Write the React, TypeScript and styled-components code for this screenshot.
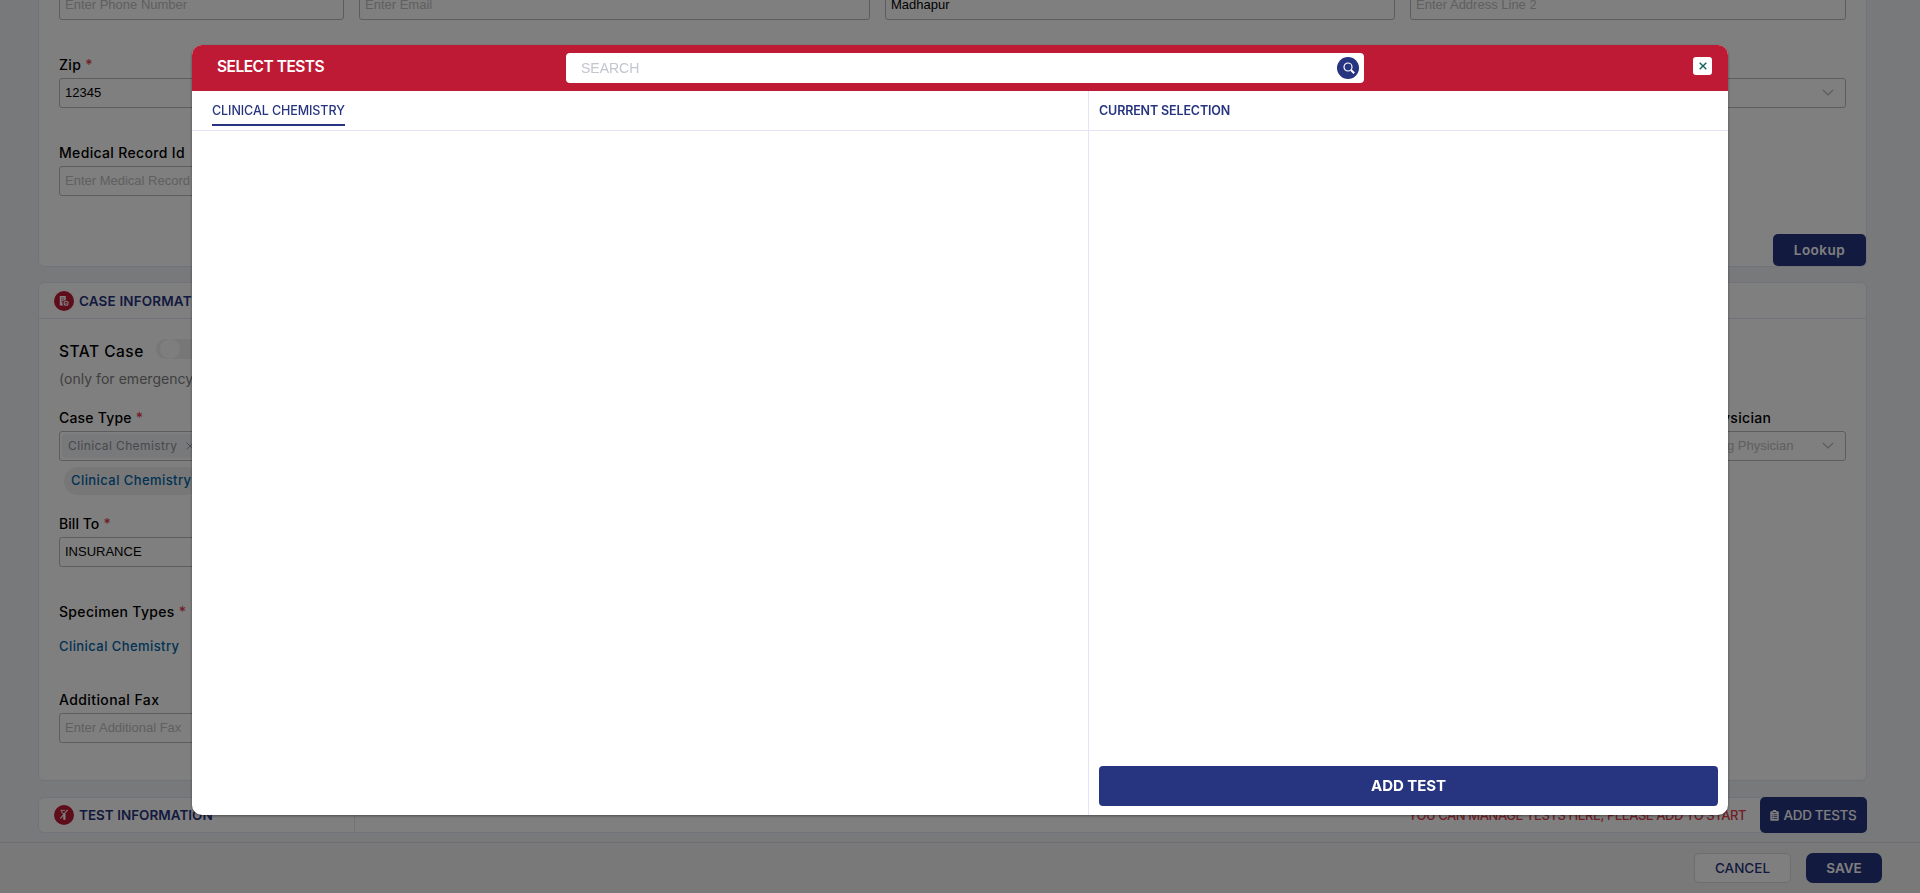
import React from 'react';
import styled, { createGlobalStyle } from 'styled-components';

const NAVY = '#273480';
const RED = '#be1a36';
const LINE = '#e5e4f5';

const GlobalStyle = createGlobalStyle`
  * { box-sizing: border-box; }
  html, body { margin: 0; padding: 0; overflow: hidden; }
  body { font-family: Inter, "Liberation Sans", sans-serif; font-size: 14px; color: #000; }
  button, input { font-family: inherit; margin: 0; }
`;

const Screen = styled.div`
  display: flex;
  flex-direction: column;
  height: 893px;
  overflow: hidden;
  background: #f0f2f7;
`;

const Content = styled.main`
  flex: 1;
  min-height: 0;
  display: flex;
  flex-direction: column;
  gap: 15px;
  padding: 0 53px 0 38px;
  overflow: hidden;
`;

const Card = styled.section<{ $height: number; $offset?: number }>`
  flex: none;
  height: ${(p) => p.$height}px;
  margin-top: ${(p) => p.$offset ?? 0}px;
  display: flex;
  flex-direction: column;
  background: #fff;
  border: 1px solid ${LINE};
  border-radius: 6px;
`;

const CardHeader = styled.header`
  flex: none;
  display: flex;
  align-items: center;
  gap: 5px;
  height: 36px;
  padding-left: 15px;
  border-bottom: 1px solid ${LINE};
`;

const IconDisc = styled.span`
  display: flex;
  align-items: center;
  justify-content: center;
  width: 20px;
  height: 20px;
  border-radius: 50%;
  background: ${RED};
`;

const Heading = styled.h2<{ $spacing: number }>`
  margin: 0;
  font-size: 13.5px;
  font-weight: 600;
  line-height: 20px;
  letter-spacing: ${(p) => p.$spacing}px;
  color: ${NAVY};
  white-space: nowrap;
`;

const FieldRow = styled.div<{ $columns: string; $height?: number }>`
  display: grid;
  grid-template-columns: ${(p) => p.$columns};
  column-gap: 15px;
  height: ${(p) => p.$height ?? 88}px;
  padding: 0 20px;
`;

const FieldBox = styled.div`
  display: flex;
  flex-direction: column;
  min-width: 0;
`;

const Label = styled.label<{ $spacing?: number }>`
  height: 26px;
  line-height: 26px;
  font-weight: 500;
  letter-spacing: ${(p) => p.$spacing ?? 0.33}px;
  white-space: nowrap;
`;

const Star = styled.span`
  margin-left: 4px;
  color: #e0404c;
`;

const Control = styled.div<{ $filled?: boolean }>`
  display: flex;
  align-items: center;
  justify-content: space-between;
  height: 30px;
  padding: 0 11px 2px 5px;
  border: 1px solid #bababa;
  border-radius: 3px;
  font-family: "Liberation Sans", Arial, sans-serif;
  font-size: 13px;
  white-space: nowrap;
  color: ${(p) => (p.$filled ? '#000' : '#c0c0c0')};
`;

const TagControl = styled(Control)`
  justify-content: flex-start;
  padding: 0 2px;
`;

const Tag = styled.span`
  display: flex;
  align-items: center;
  gap: 9px;
  height: 24px;
  padding: 0 6px 1px;
  border-radius: 4px;
  background: #f0f2f4;
  font-family: Inter, sans-serif;
  font-size: 12px;
  letter-spacing: 0.38px;
  color: #909399;
`;

const Chip = styled.span`
  align-self: flex-start;
  margin: 6px 0 0 5px;
  height: 28px;
  line-height: 27px;
  padding: 0 8px 0 7px;
  border-radius: 14px;
  background: #eeeeee;
  font-size: 13px;
  font-weight: 500;
  letter-spacing: 0.42px;
  color: #0064a8;
  white-space: nowrap;
`;

const SpecimenName = styled.span`
  margin-top: 11px;
  line-height: 20px;
  font-size: 13px;
  font-weight: 500;
  letter-spacing: 0.42px;
  color: #0064a8;
`;

const StatBlock = styled.div`
  display: flex;
  flex-direction: column;
  height: 86px;
  padding: 20px 20px 0;
`;

const StatRow = styled.div`
  display: flex;
  align-items: flex-start;
  gap: 12px;
`;

const StatTitle = styled.span`
  padding-top: 1px;
  line-height: 24px;
  font-size: 15.5px;
  font-weight: 500;
  letter-spacing: 0.5px;
`;

const StatNote = styled.span`
  margin-top: 4px;
  line-height: 22px;
  font-size: 14px;
  letter-spacing: 0.04px;
  color: #808080;
`;

const Toggle = styled.span`
  width: 46px;
  height: 20px;
  padding: 0 4px;
  border-radius: 10px;
  background: #eeeeee;
  &::before {
    content: '';
    display: block;
    width: 20px;
    height: 20px;
    border-radius: 50%;
    background: #fcfcfc;
  }
`;

const ActionRow = styled.div`
  display: flex;
  justify-content: flex-end;
  margin-top: 6px;
`;

const Button = styled.button<{ $width: number; $height: number; $spacing?: number; $outline?: boolean; $weight?: number; $radius?: number }>`
  display: flex;
  align-items: center;
  justify-content: center;
  gap: 4px;
  width: ${(p) => p.$width}px;
  height: ${(p) => p.$height}px;
  padding: 0;
  border: ${(p) => (p.$outline ? '1px solid #dadada' : '0')};
  border-radius: ${(p) => p.$radius ?? 5}px;
  background: ${(p) => (p.$outline ? '#fff' : NAVY)};
  color: ${(p) => (p.$outline ? NAVY : '#fff')};
  font-size: 13.5px;
  font-weight: ${(p) => p.$weight ?? 600};
  letter-spacing: ${(p) => p.$spacing ?? 0}px;
  white-space: nowrap;
`;

const TestBar = styled.div`
  display: flex;
  flex: 1;
  margin: -1px -1px -1px 0;
`;

const TestTitle = styled.div`
  display: flex;
  align-items: center;
  gap: 5px;
  width: 316px;
  padding: 0 0 0 15px;
  border-right: 1px solid ${LINE};
`;

const TestMessage = styled.div`
  display: flex;
  flex: 1;
  align-items: center;
  justify-content: flex-end;
  padding-right: 14px;
  font-size: 13px;
  font-weight: 500;
  letter-spacing: -0.43px;
  color: #e0404c;
`;

const Footer = styled.footer`
  flex: none;
  display: flex;
  align-items: flex-start;
  justify-content: flex-end;
  gap: 15px;
  height: 51px;
  padding: 10px 38px 0 0;
  border-top: 1px solid #dcdce0;
  background: #f3f3f3;
`;

const Overlay = styled.div`
  position: fixed;
  inset: 0;
  display: flex;
  align-items: flex-start;
  justify-content: center;
  padding-top: 45px;
  background: rgba(0, 0, 0, 0.5);
`;

const Modal = styled.div`
  display: flex;
  flex-direction: column;
  width: 1536px;
  height: 770px;
  border-radius: 10px;
  overflow: hidden;
  background: #fff;
  box-shadow: 0 1px 3px rgba(0, 0, 0, 0.4);
`;

const ModalHeader = styled.header`
  flex: none;
  display: grid;
  grid-template-columns: 349px 798px 1fr;
  align-items: center;
  height: 46px;
  padding: 0 16px 0 25px;
  background: ${RED};
`;

const ModalTitle = styled.h1`
  margin: -3px 0 0;
  font-size: 15.5px;
  font-weight: 600;
  line-height: 24px;
  letter-spacing: -0.5px;
  color: #fff;
`;

const SearchBox = styled.div`
  display: flex;
  align-items: center;
  justify-content: space-between;
  height: 30px;
  padding: 0 5px 0 15px;
  border-radius: 4px;
  background: #fff;
`;

const SearchInput = styled.input`
  flex: 1;
  padding: 0;
  border: 0;
  outline: 0;
  background: transparent;
  font-family: "Liberation Sans", Arial, sans-serif;
  font-size: 14px;
  &::placeholder { color: #c3c5cf; opacity: 1; }
`;

const SearchButton = styled.button`
  display: flex;
  align-items: center;
  justify-content: center;
  width: 22px;
  height: 22px;
  padding: 0 0 0 2px;
  border: 0;
  border-radius: 50%;
  background: ${NAVY};
`;

const CloseButton = styled.button`
  justify-self: end;
  display: flex;
  align-items: center;
  justify-content: center;
  width: 19px;
  height: 18px;
  margin-top: -4px;
  padding: 0;
  border: 0;
  border-radius: 3px;
  background: #fff;
`;

const ModalBody = styled.div`
  display: grid;
  grid-template-columns: 897px 1fr;
  flex: 1;
`;

const Pane = styled.section<{ $divided?: boolean }>`
  display: flex;
  flex-direction: column;
  border-right: ${(p) => (p.$divided ? `1px solid ${LINE}` : '0')};
`;

const PaneHeader = styled.div<{ $pad: number }>`
  display: flex;
  height: 40px;
  padding: 8px 0 0 ${(p) => p.$pad}px;
  border-bottom: 1px solid ${LINE};
`;

const Tab = styled.span`
  height: 27px;
  line-height: 23px;
  border-bottom: 2px solid ${NAVY};
  font-size: 12.5px;
  font-weight: 500;
  letter-spacing: -0.08px;
  color: ${NAVY};
`;

const PaneTitle = styled.h2`
  margin: 0;
  line-height: 23px;
  font-size: 12.5px;
  font-weight: 600;
  letter-spacing: -0.14px;
  color: ${NAVY};
`;

const PaneContent = styled.div`
  flex: 1;
`;

const AddTestButton = styled.button`
  height: 40px;
  margin: 0 10px 9px;
  padding: 0 0 2px;
  border: 0;
  border-radius: 4px;
  background: ${NAVY};
  color: #fff;
  font-size: 15px;
  font-weight: 700;
  letter-spacing: -0.05px;
`;

const Chevron = () => (
  <svg width="12" height="8" viewBox="0 0 12 8" fill="none" stroke="#b4b4b4" strokeWidth="1.1">
    <path d="M1 2 6 7 11 2" />
  </svg>
);

const Cross = ({ size, color, width }: { size: number; color: string; width: number }) => (
  <svg width={size} height={size} viewBox="0 0 8 8" fill="none" stroke={color} strokeWidth={width}>
    <path d="M.7.7 7.3 7.3M7.3.7.7 7.3" />
  </svg>
);

const CaseIcon = () => (
  <svg width="10" height="10" viewBox="0 0 10 10">
    <path d="M.8 0h6v4.3A2.9 2.9 0 0 0 4.6 9.6H.8z" fill="#fff" />
    <path d="M2 2h3.4M2 3.8h3.2M2 5.6h1.8" stroke={RED} strokeWidth=".6" />
    <circle cx="7.1" cy="7.2" r="2" fill="none" stroke="#fff" strokeWidth="1.1" />
    <path d="m6.3 7.2.7.7 1-1.3" fill="none" stroke="#fff" strokeWidth=".7" />
  </svg>
);

const TestIcon = () => (
  <svg width="10" height="12" viewBox="0 0 10 12" fill="none" stroke="#fff">
    <path d="M1.5 1.4h4.5M2.8 1.6v2.2l2.2 1" strokeWidth=".9" />
    <path d="M8.6.8 5 5.2 1.3 9.6" strokeWidth="1.1" />
    <path d="M4.2 5h2.3v4.9a1.15 1.15 0 0 1-2.3 0z" fill="#fff" stroke="none" />
  </svg>
);

const ClipboardIcon = () => (
  <svg width="9" height="11" viewBox="0 0 9 11">
    <path d="M1.2 1.2h1.6A1.7 1.7 0 0 1 6.2 1.2h1.6q.9 0 .9.9v7.8q0 .9-.9.9H1.2q-.9 0-.9-.9V2.1q0-.9.9-.9z" fill="#fff" />
    <path d="M2.7 2.6h3.6M1.8 4.8h1M3.6 4.8h3.6M1.8 6.6h1M3.6 6.6h3.6M1.8 8.5h1M3.6 8.5h3.6" stroke={NAVY} strokeWidth=".8" />
  </svg>
);

const SearchIcon = () => (
  <svg width="12" height="12" viewBox="0 0 12 12" fill="none" stroke="#fff">
    <circle cx="5" cy="5" r="4" strokeWidth="1.2" />
    <path d="m8 8 3.2 3.2" strokeWidth="2" />
  </svg>
);

type FieldProps = { label: string; text?: string; filled?: boolean; required?: boolean; select?: boolean; spacing?: number };

const Field = ({ label, text = '', filled, required, select, spacing }: FieldProps) => (
  <FieldBox>
    <Label $spacing={spacing}>
      {label}
      {required && <Star>*</Star>}
    </Label>
    <Control $filled={filled}>
      <span>{text}</span>
      {select && <Chevron />}
    </Control>
  </FieldBox>
);

const PATIENT_COLUMNS = '285px 511px 510px 436px';
const CASE_COLUMNS = '285px 1fr 211px';

export default function App() {
  return (
    <>
      <GlobalStyle />
      <Screen>
        <Content>
          <Card $height={304} $offset={-37}>
            <FieldRow $columns={PATIENT_COLUMNS}>
              <Field label="Phone Number" text="Enter Phone Number" />
              <Field label="Email" text="Enter Email" />
              <Field label="Address Line 1" text="Madhapur" filled />
              <Field label="Address Line 2" text="Enter Address Line 2" />
            </FieldRow>
            <FieldRow $columns={PATIENT_COLUMNS}>
              <Field label="Zip" text="12345" filled required />
              <Field label="City" />
              <Field label="State" />
              <Field label="Country" select />
            </FieldRow>
            <FieldRow $columns={PATIENT_COLUMNS}>
              <Field label="Medical Record Id" text="Enter Medical Record Id" />
            </FieldRow>
            <ActionRow>
              <Button $width={93} $height={32} $spacing={0.5}>Lookup</Button>
            </ActionRow>
          </Card>

          <Card $height={499}>
            <CardHeader>
              <IconDisc><CaseIcon /></IconDisc>
              <Heading $spacing={0.15}>CASE INFORMATION</Heading>
            </CardHeader>
            <StatBlock>
              <StatRow>
                <StatTitle>STAT Case</StatTitle>
                <Toggle />
              </StatRow>
              <StatNote>(only for emergency cases)</StatNote>
            </StatBlock>
            <FieldRow $columns={CASE_COLUMNS} $height={106}>
              <FieldBox>
                <Label $spacing={0.2}>Case Type<Star>*</Star></Label>
                <TagControl>
                  <Tag>Clinical Chemistry<Cross size={8} color="#909399" width={0.9} /></Tag>
                </TagControl>
                <Chip>Clinical Chemistry</Chip>
              </FieldBox>
              <FieldBox />
              <Field label="Referring Physician" text="Select Referring Physician" select />
            </FieldRow>
            <FieldRow $columns={CASE_COLUMNS}>
              <Field label="Bill To" text="INSURANCE" filled required spacing={0.05} />
            </FieldRow>
            <FieldRow $columns={CASE_COLUMNS}>
              <FieldBox>
                <Label $spacing={0.33}>Specimen Types<Star>*</Star></Label>
                <SpecimenName>Clinical Chemistry</SpecimenName>
              </FieldBox>
            </FieldRow>
            <FieldRow $columns={CASE_COLUMNS}>
              <Field label="Additional Fax" text="Enter Additional Fax" spacing={0.4} />
            </FieldRow>
          </Card>

          <Card $height={36} $offset={1}>
            <TestBar>
              <TestTitle>
                <IconDisc><TestIcon /></IconDisc>
                <Heading $spacing={0}>TEST INFORMATION</Heading>
              </TestTitle>
              <TestMessage>YOU CAN MANAGE TESTS HERE, PLEASE ADD TO START</TestMessage>
              <Button $width={107} $height={36} $spacing={-0.31} $weight={500}><ClipboardIcon />ADD TESTS</Button>
            </TestBar>
          </Card>
        </Content>
        <Footer>
          <Button $width={97} $height={30} $outline $weight={500}>CANCEL</Button>
          <Button $width={76} $height={30} $radius={7}>SAVE</Button>
        </Footer>
      </Screen>

      <Overlay>
        <Modal>
          <ModalHeader>
            <ModalTitle>SELECT TESTS</ModalTitle>
            <SearchBox>
              <SearchInput placeholder="SEARCH" />
              <SearchButton><SearchIcon /></SearchButton>
            </SearchBox>
            <CloseButton><Cross size={8} color="#11635c" width={1.4} /></CloseButton>
          </ModalHeader>
          <ModalBody>
            <Pane $divided>
              <PaneHeader $pad={20}><Tab>CLINICAL CHEMISTRY</Tab></PaneHeader>
            </Pane>
            <Pane>
              <PaneHeader $pad={10}><PaneTitle>CURRENT SELECTION</PaneTitle></PaneHeader>
              <PaneContent />
              <AddTestButton>ADD TEST</AddTestButton>
            </Pane>
          </ModalBody>
        </Modal>
      </Overlay>
    </>
  );
}
